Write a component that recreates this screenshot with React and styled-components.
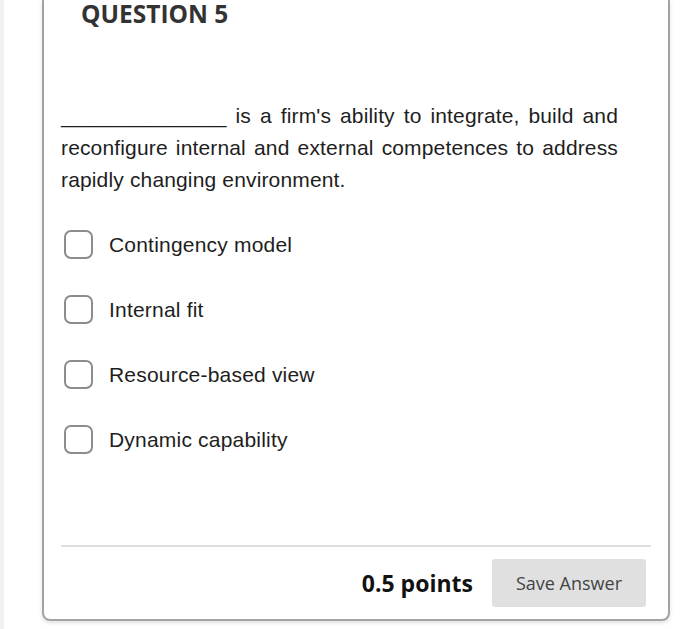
import React from 'react';
import styled, { createGlobalStyle } from 'styled-components';

const GlobalStyle = createGlobalStyle`
    html, body {
        margin : 0;
        padding : 0;
        background : #ffffff;
    }
`

const options = [
    'Contingency model',
    'Internal fit',
    'Resource-based view',
    'Dynamic capability',
];

function App() {
    return (
        <>
            <GlobalStyle />
            <StPage>
                <StCard>
                    <StHeading>QUESTION 5</StHeading>

                    <StQuestion>
                        ______________ is a firm's ability to integrate, build and reconfigure internal and external competences to address rapidly changing environment.
                    </StQuestion>

                    <StOptionList>
                        {options.map((opt) => (
                            <StOption key={opt}>
                                <StCheckbox />
                                <StLabel>{opt}</StLabel>
                            </StOption>
                        ))}
                    </StOptionList>

                    <StDivider />

                    <StFooter>
                        <StPoints>0.5 points</StPoints>
                        <StSaveButton>Save Answer</StSaveButton>
                    </StFooter>
                </StCard>
            </StPage>
        </>
    );
}

export default App;

const StPage = styled.div`
    border-left : 4px solid #f2f2f2;
    padding : 0 30px 0 38px;
    height : 629px;
    box-sizing : border-box;
    overflow : hidden;
`
const StCard = styled.div`
    border : 2px solid #a3a3a3;
    border-top : none;
    border-radius : 0 0 8px 8px;
    box-shadow : 0 2px 4px rgba(0, 0, 0, 0.12);
    padding : 3px 17px 12px 17px;
    background : #ffffff;
`
const StHeading = styled.h2`
    margin : 0 0 0 20px;
    font-family : "Open Sans", sans-serif;
    font-weight : 700;
    font-size : 24.5px;
    line-height : 22px;
    color : #333333;
`
const StQuestion = styled.p`
    margin : 75px 33px 0 0;
    font-family : "Liberation Sans", Arial, sans-serif;
    font-size : 21px;
    letter-spacing : 0.15px;
    line-height : 32px;
    color : #1e1e1e;
    text-align : justify;
`
const StOptionList = styled.div`
    display : flex;
    flex-direction : column;
    gap : 36px;
    margin-top : 34px;
    padding-left : 3px;
`
const StOption = styled.div`
    display : flex;
    align-items : center;
    gap : 16px;
    height : 29px;
`
const StCheckbox = styled.span`
    display : block;
    width : 29px;
    height : 29px;
    box-sizing : border-box;
    border : 2px solid #8c8c8c;
    border-radius : 7px;
    background : #ffffff;
`
const StLabel = styled.span`
    font-family : "Liberation Sans", Arial, sans-serif;
    font-size : 21px;
    letter-spacing : 0.2px;
    color : #1e1e1e;
`
const StDivider = styled.hr`
    margin : 91px 0 0 0;
    border : none;
    height : 2px;
    background : #dedede;
`
const StFooter = styled.div`
    display : flex;
    justify-content : flex-end;
    align-items : center;
    gap : 19px;
    margin-top : 12px;
    padding-right : 5px;
`
const StPoints = styled.span`
    font-family : "Open Sans", sans-serif;
    font-weight : 700;
    font-size : 23px;
    color : #111111;
`
const StSaveButton = styled.button`
    height : 48px;
    padding : 0 24px;
    border : none;
    border-radius : 3px;
    background : #e0e0e0;
    font-family : "Open Sans", sans-serif;
    font-size : 18px;
    color : #444444;
`
